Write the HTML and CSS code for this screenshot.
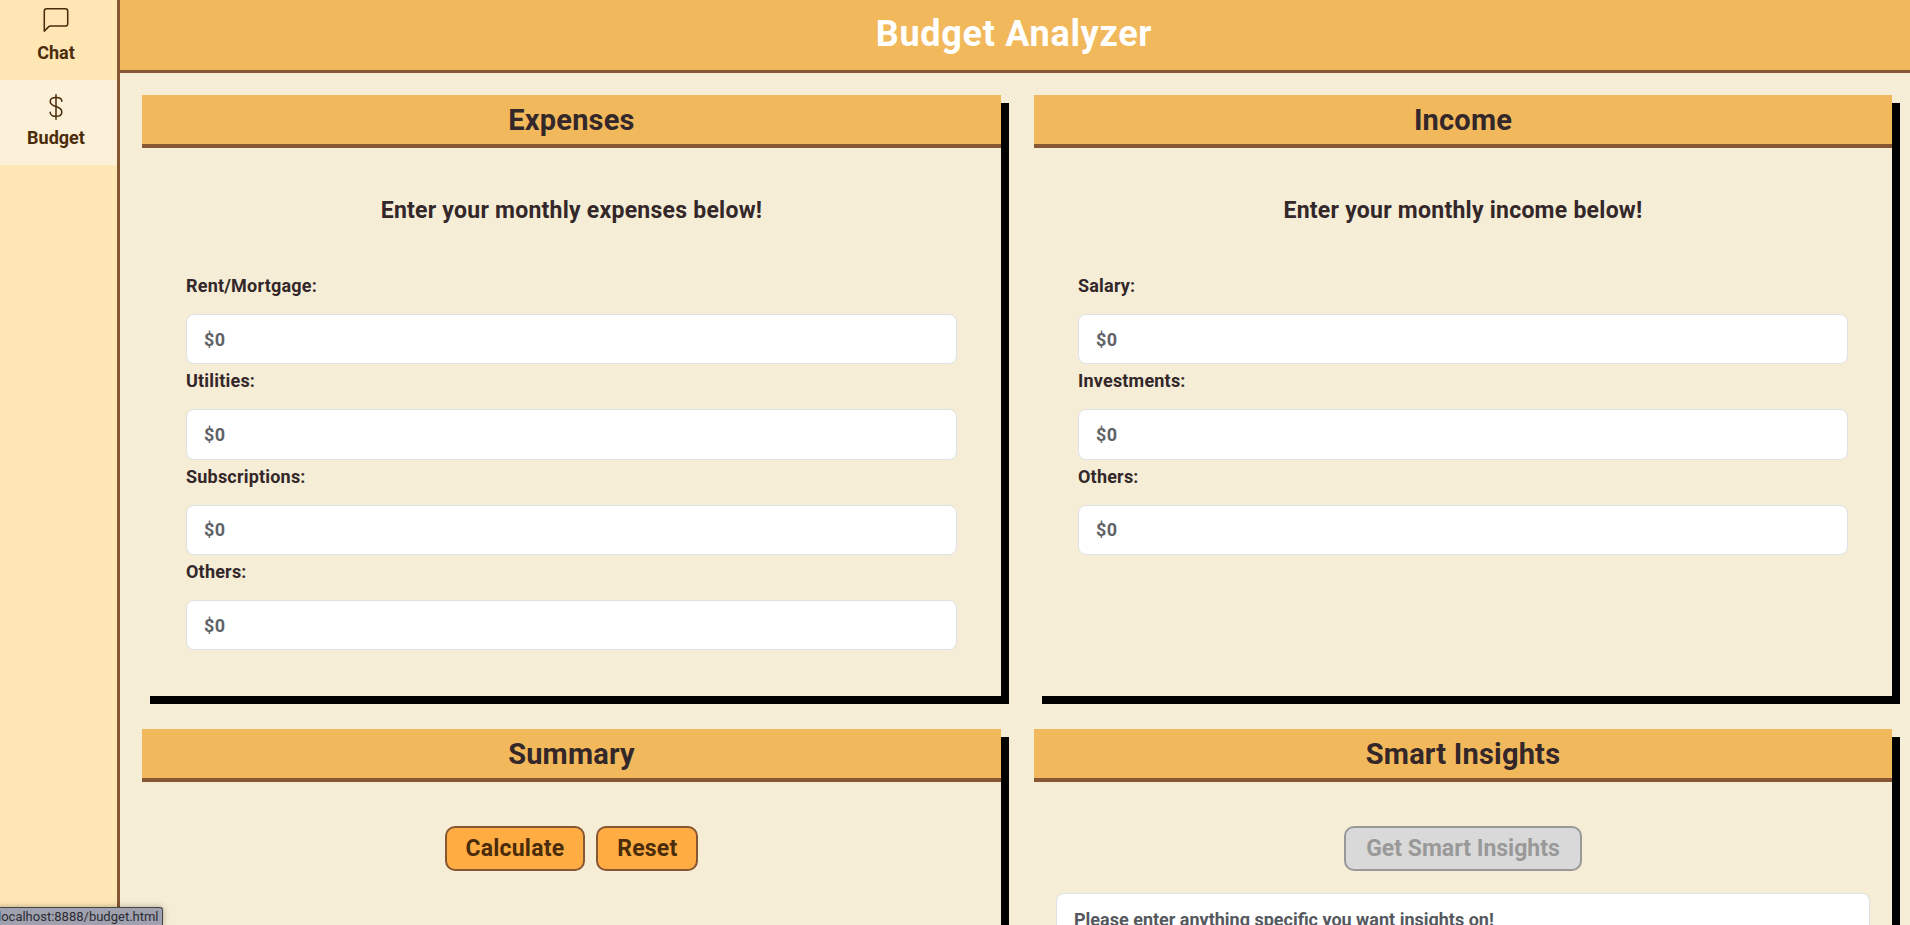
FILE: index.html
```html
<!DOCTYPE html>
<html lang="en">
<head>
<meta charset="utf-8">
<title>Budget Analyzer</title>
<link rel="stylesheet" href="styles.css">
</head>
<body>
<div class="app">
  <nav class="sidebar">
    <a class="nav-item nav-chat">
      <svg class="nav-icon" viewBox="0 0 16 16" fill="currentColor"><path d="M14 1a1 1 0 0 1 1 1v8a1 1 0 0 1-1 1H4.414A2 2 0 0 0 3 11.586l-2 2V2a1 1 0 0 1 1-1h12zM2 0a2 2 0 0 0-2 2v12.793a.5.5 0 0 0 .854.353l2.853-2.853A1 1 0 0 1 4.414 12H14a2 2 0 0 0 2-2V2a2 2 0 0 0-2-2H2z"/></svg>
      <span>Chat</span>
    </a>
    <a class="nav-item nav-active">
      <svg class="nav-icon nav-dollar" viewBox="0 0 12 22" fill="none" stroke="currentColor" stroke-width="1.3" stroke-linecap="round"><path d="M11 6C11 3.8 8.8 2.8 6 2.8S1 4 1 6.2 3 9.6 6 10.6s5 2.2 5 4.6-2.2 3.8-5 3.8-5-1.2-5-3.6"/><path d="M6 .6v20.8"/></svg>
      <span>Budget</span>
    </a>
  </nav>
  <div class="main">
    <header class="page-header"><h1>Budget Analyzer</h1></header>
    <div class="grid">
      <section class="card">
        <h2 class="card-title">Expenses</h2>
        <div class="card-body">
          <p class="intro">Enter your monthly expenses below!</p>
          <div class="fields">
            <label>Rent/Mortgage:</label><input placeholder="$0">
            <label>Utilities:</label><input placeholder="$0">
            <label>Subscriptions:</label><input placeholder="$0">
            <label>Others:</label><input placeholder="$0">
          </div>
        </div>
      </section>
      <section class="card">
        <h2 class="card-title">Income</h2>
        <div class="card-body">
          <p class="intro">Enter your monthly income below!</p>
          <div class="fields">
            <label>Salary:</label><input placeholder="$0">
            <label>Investments:</label><input placeholder="$0">
            <label>Others:</label><input placeholder="$0">
          </div>
        </div>
      </section>
      <section class="card">
        <h2 class="card-title">Summary</h2>
        <div class="actions">
          <button class="btn">Calculate</button>
          <button class="btn">Reset</button>
        </div>
      </section>
      <section class="card">
        <h2 class="card-title">Smart Insights</h2>
        <div class="actions">
          <button class="btn btn-disabled" disabled>Get Smart Insights</button>
        </div>
        <textarea class="prompt" placeholder="Please enter anything specific you want insights on!"></textarea>
      </section>
    </div>
  </div>
</div>
<div class="status-bar">localhost:8888/budget.html</div>
</body>
</html>
```
FILE: styles.css
```css
* { box-sizing: border-box; }
html, body { margin: 0; height: 100%; overflow: hidden; }
body { font-family: Roboto, "Liberation Sans", sans-serif; font-weight: 700; background: #f5edd6; color: #33272a; }
.app { display: flex; height: 925px; }
.sidebar { width: 120px; flex: none; background: #ffe6b5; border-right: 3px solid #875632; color: #4a2c0a; }
.nav-item { display: flex; flex-direction: column; align-items: center; padding-right: 5px; font-size: 18px; }
.nav-chat { height: 80px; padding-top: 8px; gap: 9px; }
.nav-active { height: 85px; padding-top: 14px; gap: 7px; background: #fdf0d8; }
.nav-icon { width: 26px; height: 25px; }
.nav-dollar { width: 14px; height: 26px; }
.nav-item span { line-height: 21px; }
.main { flex: 1; min-width: 0; }
.page-header { height: 73px; background: #f2b95c; border-bottom: 3px solid #875632; display: flex; align-items: center; justify-content: center; padding: 0 2px 2px 0; }
.page-header h1 { margin: 0; font-size: 36px; color: #fff; line-height: 1; letter-spacing: .7px; }
.grid { display: grid; grid-template-columns: 859px 858px; column-gap: 33px; row-gap: 33px; padding: 22px 0 0 22px; grid-template-rows: 601px auto; }
.card { box-shadow: 8px 8px 0 #000; background: #f5edd6; }
.card-title { margin: 0; height: 53px; background: #f2b95c; border-bottom: 4px solid #875632; font-size: 29px; line-height: 50px; text-align: center; color: #33272a; letter-spacing: .2px; }
.card-body { padding: 0 44px; }
.intro { margin: 0; padding-top: 49px; height: 121px; text-align: center; font-size: 23px; line-height: 28px; letter-spacing: .25px; }
.fields { display: flex; flex-direction: column; }
.fields label { height: 45px; line-height: 34px; font-size: 18px; letter-spacing: .2px; }
.fields input { height: 50.33px; border: 1.5px solid #dee2e6; border-radius: 8px; background: #fff; padding: 0 17px; font: inherit; font-size: 18px; letter-spacing: .3px; }
.fields input::placeholder { color: #5f6368; opacity: 1; }
.actions { display: flex; justify-content: center; gap: 11px; padding-top: 44px; }
.btn { height: 45px; padding: 0 19px; border: 2px solid #875632; border-radius: 10px; background: #ffad42; color: #4a2c0a; font: inherit; font-size: 23px; letter-spacing: .2px; }
.btn-disabled { padding: 0 20px; background: #d9d9d9; border-color: #999; color: #999; letter-spacing: 0; }
.prompt { display: block; margin: 22px 23px 0 22px; width: 814px; height: 120px; border: 1.5px solid #dee2e6; border-radius: 8px; background: #fff; padding: 15px 17px; font: inherit; font-size: 18px; resize: none; }
.prompt::placeholder { color: #55595e; opacity: 1; }
.status-bar { position: absolute; left: -3px; bottom: 0; height: 18px; width: 166px; background: #9fa2ae; border: 1px solid #444; border-bottom: 0; border-radius: 0 3px 0 0; box-shadow: 0 0 6px rgba(0,0,0,.3); font-weight: 400; font-size: 13px; line-height: 18px; color: #2b2b33; white-space: nowrap; overflow: hidden; }
```
